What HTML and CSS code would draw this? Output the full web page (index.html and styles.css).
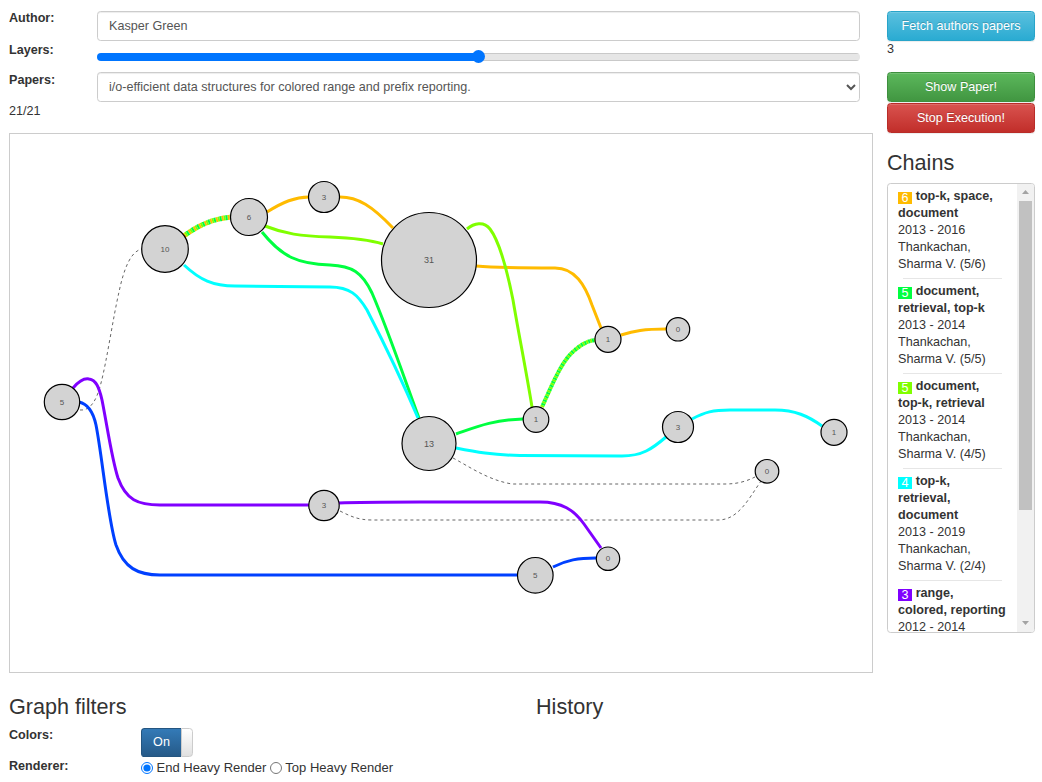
FILE: index.html
```html
<!DOCTYPE html>
<html>
<head>
<meta charset="utf-8">
<title>Chains</title>
<link rel="stylesheet" href="styles.css">
</head>
<body>
<div class="page">
  <div class="main">
    <div class="form">
      <label class="lbl">Author:</label>
      <input class="ctl text-input" type="text" value="Kasper Green">
      <label class="lbl">Layers:</label>
      <input class="range" type="range" min="1" max="5" value="3">
      <label class="lbl">Papers:</label>
      <select class="ctl select"><option>i/o-efficient data structures for colored range and prefix reporting.</option></select>
      <div class="count">21/21</div>
    </div>

    <div class="graph">
      <svg viewBox="10 134 862 538" width="862" height="538">
        <path class="dash" d="M80,410 C91,411 97,399 101,383 C107,360 113,318 119,292 C124,268 131,251 142,249"/>
        <path class="dash" d="M453,458 C470,467 488,480 512,484 L725,484 C738,484 747,481 755,477"/>
        <path class="dash" d="M340,511 C350,516 358,520 372,520 L718,520 C738,520 748,500 761,481"/>

        <path class="edge orange" d="M267,212 C283,202 295,197 309,197"/>
        <path class="edge orange" d="M340,197 C358,197 372,206 393,228"/>
        <path class="edge orange" d="M476,266 C500,268 525,268 555,268 C575,268 585,285 592,305 L601,328"/>
        <path class="edge orange" d="M621,335 C634,331 644,329 666,329"/>

        <path class="edge lime" d="M265,226 C285,234 300,236 330,237 C355,238 370,240 383,244"/>
        <path class="edge lime" d="M467,229 C474,223 484,221 490,229 C500,242 507,270 513,300 C518,330 526,370 532,407"/>

        <path class="edge green" d="M262,232 C282,257 298,264 330,265 C352,266 362,272 372,293 C388,330 406,383 419,418"/>
        <path class="edge green" d="M456,434 C476,427 492,420 523,419"/>

        <path class="edge cyan" d="M184,265 C200,280 213,286 235,286 L330,287 C350,287 358,295 367,310 C385,345 404,385 418,418"/>
        <path class="edge cyan" d="M456,448 C476,452 492,455 520,455.5 L622,456 C642,456 652,449 666,437"/>
        <path class="edge cyan" d="M692,419 C705,412 713,410 730,410 L775,410 C795,410 808,416 822,426"/>

        <path class="edge purple" d="M73,388 C79,381 84,378 89,379 C96,380 99,387 102,400 C107,425 112,460 118,478 C126,500 138,505 160,505 L309,505"/>
        <path class="edge purple" d="M339,503 C360,502 390,502 420,502 L540,502 C562,502 574,510 584,524 L601,548"/>

        <path class="edge blue" d="M79,402 C88,404 93,411 96,425 C102,455 108,520 116,545 C124,568 138,575 160,575 L517,575"/>
        <path class="edge blue" d="M553,567 C567,560 578,558 596,558"/>

        <path class="stripe s-orange" d="M184,236 C197,226 212,219 231,217"/>
        <path class="stripe s-lime" d="M184,236 C197,226 212,219 231,217"/>
        <path class="stripe s-green" d="M184,236 C197,226 212,219 231,217"/>

        <path class="stripe2 s2-lime" d="M542,407 C552,385 562,360 575,350 C582,344 588,341 595,340"/>
        <path class="stripe2 s2-green" d="M542,407 C552,385 562,360 575,350 C582,344 588,341 595,340"/>

        <circle class="node" cx="62" cy="402" r="17.7"/><text class="nl" x="62" y="402">5</text>
        <circle class="node" cx="165" cy="249" r="23.3"/><text class="nl" x="165" y="249">10</text>
        <circle class="node" cx="249" cy="217" r="18.5"/><text class="nl" x="249" y="217">6</text>
        <circle class="node" cx="324" cy="197" r="15.5"/><text class="nl" x="324" y="197">3</text>
        <circle class="node" cx="429" cy="260" r="47.5"/><text class="nl big" x="429" y="260">31</text>
        <circle class="node" cx="429" cy="443.5" r="27"/><text class="nl big" x="429" y="443.5">13</text>
        <circle class="node" cx="536" cy="419.5" r="12.8"/><text class="nl" x="536" y="419.5">1</text>
        <circle class="node" cx="608" cy="339.3" r="13"/><text class="nl" x="608" y="339.3">1</text>
        <circle class="node" cx="678" cy="329.3" r="11.7"/><text class="nl" x="678" y="329.3">0</text>
        <circle class="node" cx="678" cy="427" r="15.5"/><text class="nl" x="678" y="427">3</text>
        <circle class="node" cx="834" cy="432.3" r="13"/><text class="nl" x="834" y="432.3">1</text>
        <circle class="node" cx="767" cy="471.3" r="11.8"/><text class="nl" x="767" y="471.3">0</text>
        <circle class="node" cx="324" cy="505.5" r="15.2"/><text class="nl" x="324" y="505.5">3</text>
        <circle class="node" cx="608" cy="558.7" r="11.7"/><text class="nl" x="608" y="558.7">0</text>
        <circle class="node" cx="535.3" cy="575.3" r="17.8"/><text class="nl" x="535.3" y="575.3">5</text>
      </svg>
    </div>

    <div class="bottom">
      <div class="filters">
        <h3>Graph filters</h3>
        <div class="filter-grid">
          <label class="lbl">Colors:</label>
          <div class="toggle"><span class="toggle-on">On</span><span class="toggle-handle"></span></div>
          <label class="lbl">Renderer:</label>
          <div class="radios"><label class="radio"><input type="radio" name="renderer" checked> End Heavy Render</label><label class="radio"><input type="radio" name="renderer"> Top Heavy Render</label></div>
        </div>
      </div>
      <div class="history">
        <h3>History</h3>
      </div>
    </div>
  </div>

  <div class="side">
    <button class="btn btn-info">Fetch authors papers</button>
    <div class="layer-value">3</div>
    <button class="btn btn-success">Show Paper!</button>
    <button class="btn btn-danger">Stop Execution!</button>
    <h3 class="chains-title">Chains</h3>
    <div class="chains">
      <div class="chains-list">
        <div class="chain"><span class="badge c-orange">6</span> <b>top-k, space,<br>document</b><br>2013 - 2016<br>Thankachan,<br>Sharma V. (5/6)</div>
        <div class="sep"></div>
        <div class="chain"><span class="badge c-green">5</span> <b>document,<br>retrieval, top-k</b><br>2013 - 2014<br>Thankachan,<br>Sharma V. (5/5)</div>
        <div class="sep"></div>
        <div class="chain"><span class="badge c-lime">5</span> <b>document,<br>top-k, retrieval</b><br>2013 - 2014<br>Thankachan,<br>Sharma V. (4/5)</div>
        <div class="sep"></div>
        <div class="chain"><span class="badge c-cyan">4</span> <b>top-k,<br>retrieval,<br>document</b><br>2013 - 2019<br>Thankachan,<br>Sharma V. (2/4)</div>
        <div class="sep"></div>
        <div class="chain"><span class="badge c-purple">3</span> <b>range,<br>colored, reporting</b><br>2012 - 2014</div>
      </div>
      <div class="scrollbar">
        <div class="sb-btn"><svg width="7" height="4" viewBox="0 0 7 4"><path d="M0,4 L3.5,0 L7,4 Z" fill="#a3a3a3"/></svg></div>
        <div class="sb-track"><div class="sb-thumb"></div></div>
        <div class="sb-btn"><svg width="7" height="4" viewBox="0 0 7 4"><path d="M0,0 L3.5,4 L7,0 Z" fill="#a3a3a3"/></svg></div>
      </div>
    </div>
  </div>
</div>
</body>
</html>
```

FILE: styles.css
```css
html, body {
  margin: 0;
  padding: 0;
  background: #fff;
}

body {
  font-family: "Liberation Sans", Arial, sans-serif;
  font-size: 12.6px;
  line-height: 18px;
  color: #333;
}

.page {
  display: grid;
  grid-template-columns: 864px 148px;
  column-gap: 14px;
  padding: 9px 0 0 9px;
  align-items: start;
}

/* ---------- form ---------- */
.form {
  display: grid;
  grid-template-columns: 88px 763px;
  align-items: start;
}

.lbl {
  display: block;
  font-weight: bold;
  line-height: 18px;
}

.ctl {
  box-sizing: border-box;
  display: block;
  width: 763px;
  height: 30px;
  margin: 0;
  border: 1px solid #ccc;
  border-radius: 3.6px;
  background-color: #fff;
  box-shadow: inset 0 1px 1px rgba(0, 0, 0, 0.075);
  font-family: "Liberation Sans", Arial, sans-serif;
  font-size: 12.6px;
  color: #555;
}

.text-input {
  margin-top: 2px;
  padding: 0 11px;
}

.select {
  margin-top: 1px;
  padding: 0 7px;
}

.range {
  -webkit-appearance: none;
  appearance: none;
  display: block;
  width: 763px;
  height: 13px;
  margin: 9px 0 8px;
  padding: 0;
  background: transparent;
}

.range::-webkit-slider-runnable-track {
  height: 8px;
  border-radius: 4px;
  background:
    linear-gradient(to right, transparent 50%, #c9c9c9 50%) top / 100% 1px no-repeat,
    linear-gradient(to right, transparent 50%, #c9c9c9 50%) bottom / 100% 1px no-repeat,
    linear-gradient(to right, #0075ff 0, #0075ff 50%, #e6e6e6 50%, #e6e6e6 100%);
}

.range::-webkit-slider-thumb {
  -webkit-appearance: none;
  appearance: none;
  width: 13px;
  height: 13px;
  margin-top: -2.5px;
  border: 0;
  border-radius: 50%;
  background: #0075ff;
}

.count {
  line-height: 18px;
}

/* ---------- graph ---------- */
.graph {
  box-sizing: border-box;
  width: 864px;
  height: 540px;
  margin-top: 13px;
  border: 1px solid #ccc;
}

.graph svg {
  display: block;
}

.edge {
  fill: none;
  stroke-width: 3;
}

.orange { stroke: #ffbb00; }
.lime { stroke: #80ff00; }
.green { stroke: #00ff40; }
.cyan { stroke: #00ffff; }
.purple { stroke: #8000ff; }
.blue { stroke: #0040ff; }

.dash {
  fill: none;
  stroke: #666;
  stroke-width: 1;
  stroke-dasharray: 3 3;
}

.stripe {
  fill: none;
  stroke-width: 5;
  stroke-dasharray: 2 4;
}

.s-orange { stroke: #ffbb00; }
.s-lime { stroke: #80ff00; stroke-dashoffset: -2; }
.s-green { stroke: #00ff40; stroke-dashoffset: -4; }

.stripe2 {
  fill: none;
  stroke-width: 4;
  stroke-dasharray: 2 2;
}

.s2-lime { stroke: #80ff00; }
.s2-green { stroke: #00ff40; stroke-dashoffset: -2; }

.node {
  fill: #d3d3d3;
  stroke: #000;
  stroke-width: 1.2;
}

.nl {
  font-family: "Liberation Sans", Arial, sans-serif;
  font-size: 8px;
  fill: #555;
  text-anchor: middle;
  dominant-baseline: central;
}

.nl.big {
  font-size: 9px;
}

/* ---------- bottom ---------- */
.bottom {
  display: grid;
  grid-template-columns: 527px 1fr;
}

h3 {
  margin: 22px 0 0;
  font-size: 21.6px;
  font-weight: normal;
  line-height: 1.1;
  color: #333;
}

.filter-grid {
  display: grid;
  grid-template-columns: 132px 1fr;
  align-items: start;
  margin-top: 7px;
}

.toggle {
  display: flex;
  width: 52px;
  height: 29px;
  margin-top: 2px;
}

.toggle-on {
  box-sizing: border-box;
  width: 40px;
  display: flex;
  align-items: center;
  justify-content: center;
  color: #fff;
  background: linear-gradient(#337ab7, #265a88);
  border: 1px solid #245580;
  border-right: 0;
  border-radius: 3.6px 0 0 3.6px;
  font-size: 12.6px;
}

.toggle-handle {
  box-sizing: border-box;
  width: 12px;
  background: linear-gradient(#fff, #e0e0e0);
  border: 1px solid #ccc;
  border-radius: 0 3.6px 3.6px 0;
}

.radios {
  display: flex;
  white-space: nowrap;
  margin-top: 2px;
}

.radio {
  display: flex;
  align-items: center;
  line-height: 18px;
  font-size: 13px;
}

.radio input {
  width: 12px;
  height: 12px;
  margin: 0 3.5px 0 0;
}

.radio + .radio {
  margin-left: 3.5px;
}

/* ---------- side ---------- */
.side {
  display: flex;
  flex-direction: column;
}

.btn {
  box-sizing: border-box;
  display: block;
  width: 148px;
  height: 30px;
  padding: 0 0 1px;
  border: 1px solid;
  border-radius: 3.6px;
  color: #fff;
  font-family: "Liberation Sans", Arial, sans-serif;
  font-size: 12.6px;
  text-align: center;
  text-shadow: 0 -1px 0 rgba(0, 0, 0, 0.2);
  box-shadow: inset 0 1px 0 rgba(255, 255, 255, 0.15), 0 1px 1px rgba(0, 0, 0, 0.075);
}

.btn-info {
  margin-top: 2px;
  background: linear-gradient(#5bc0de, #2aabd2);
  border-color: #28a4c9;
}

.btn-success {
  margin-top: 15px;
  background: linear-gradient(#5cb85c, #419641);
  border-color: #3e8f3e;
}

.btn-danger {
  margin-top: 1px;
  background: linear-gradient(#d9534f, #c12e2a);
  border-color: #b92c28;
}

.layer-value {
  line-height: 16px;
}

.chains-title {
  margin: 18px 0 8px;
}

.chains {
  box-sizing: border-box;
  display: flex;
  height: 450px;
  border: 1px solid #ccc;
  border-radius: 3.6px;
  overflow: hidden;
}

.chains-list {
  flex: 1;
  overflow: hidden;
}

.chain {
  padding: 4px 0 5px 10px;
  line-height: 17px;
  white-space: nowrap;
}

.badge {
  display: inline-block;
  height: 12px;
  line-height: 12px;
  padding: 0 3.6px;
  color: #fff;
  vertical-align: -2px;
}

.c-orange { background: #ffbb00; }
.c-green { background: #00ff40; }
.c-lime { background: #80ff00; }
.c-cyan { background: #00ffff; }
.c-purple { background: #8000ff; }

.sep {
  height: 1px;
  margin: 0 15px;
  background: #e6e6e6;
}

.scrollbar {
  width: 17px;
  display: flex;
  flex-direction: column;
  background: #f1f1f1;
}

.sb-btn {
  height: 17px;
  display: flex;
  align-items: center;
  justify-content: center;
}

.sb-track {
  flex: 1;
}

.sb-thumb {
  height: 309px;
  margin: 0 2px;
  background: #c1c1c1;
}
```
